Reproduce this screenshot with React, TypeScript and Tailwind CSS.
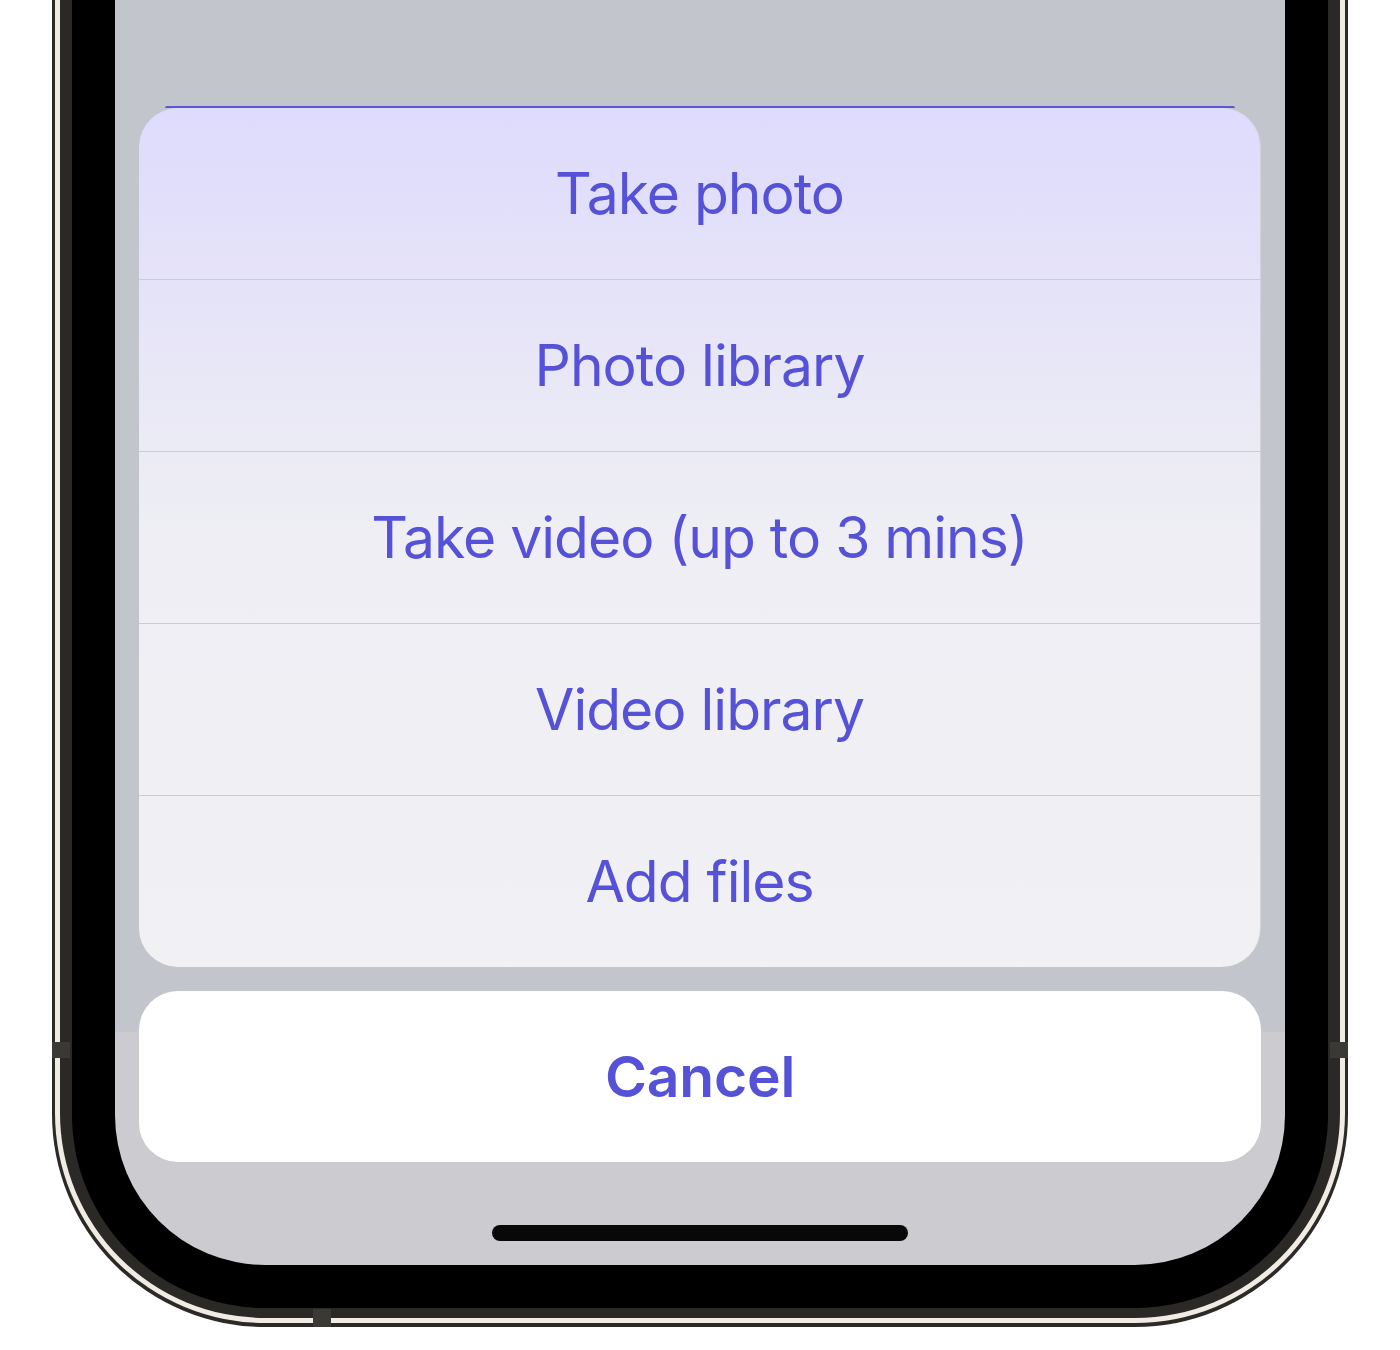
const options = [
  "Take photo",
  "Photo library",
  "Take video (up to 3 mins)",
  "Video library",
  "Add files",
];

const font = { fontFamily: "Inter, 'Noto Sans', sans-serif" };

function ActionSheet() {
  return (
    <div className="mx-[24px] overflow-hidden rounded-[39px] border-r border-[#d3d3da] bg-[linear-gradient(to_bottom,#dedbfd_0px,#e3e0fa_120px,#e9e8f6_280px,#eeeef4_420px,#f1f1f4_100%)]">
      {options.map((label, i) => (
        <div
          key={label}
          className={
            i < options.length - 1
              ? "flex h-[172px] items-center justify-center border-b border-[#cbcbd2]"
              : "flex h-[171px] items-center justify-center"
          }
        >
          <span className="text-[57px] leading-none tracking-[-1px] text-[#5652d7]">
            {label}
          </span>
        </div>
      ))}
    </div>
  );
}

function Screen() {
  return (
    <div className="flex h-[1265px] w-[1170px] flex-col overflow-hidden rounded-b-[150px] bg-[linear-gradient(to_bottom,#c3c5cc_1032px,#cccbd0_1032px)]">
      <div className="h-[106px] shrink-0" />
      <div className="mx-[50px] h-[2px] shrink-0 rounded-t-full bg-[#5b57d5]" />
      <ActionSheet />
      <div className="mx-[24px] mt-[24px] flex h-[171px] shrink-0 items-center justify-center rounded-[39px] bg-white">
        <span className="text-[57px] font-semibold leading-none tracking-[-0.2px] text-[#5652d7]">
          Cancel
        </span>
      </div>
      <div className="mt-[63px] flex justify-center">
        <div className="h-[16px] w-[416px] rounded-full bg-[#080808]" />
      </div>
    </div>
  );
}

export default function App() {
  return (
    <div className="h-[1350px] w-[1400px] bg-white" style={font}>
      <div className="flex justify-center">
        <div className="relative rounded-b-[213px] bg-[#2b2a26] px-[3px] pb-[4px]">
          <div className="rounded-b-[210px] bg-[#f0ebe3] px-[5px] pb-[5px]">
            <div className="rounded-b-[205px] bg-[#2a2925] px-[12px] pb-[10px]">
              <div className="rounded-b-[193px] bg-black px-[43px] pb-[43px]">
                <Screen />
              </div>
            </div>
          </div>
          <div className="absolute left-0 top-[1042px] h-[16px] w-[18px] bg-[#3a3936]" />
          <div className="absolute right-0 top-[1042px] h-[16px] w-[18px] bg-[#3a3936]" />
          <div className="absolute bottom-0 left-[261px] h-[18px] w-[18px] bg-[#3a3936]" />
        </div>
      </div>
    </div>
  );
}
